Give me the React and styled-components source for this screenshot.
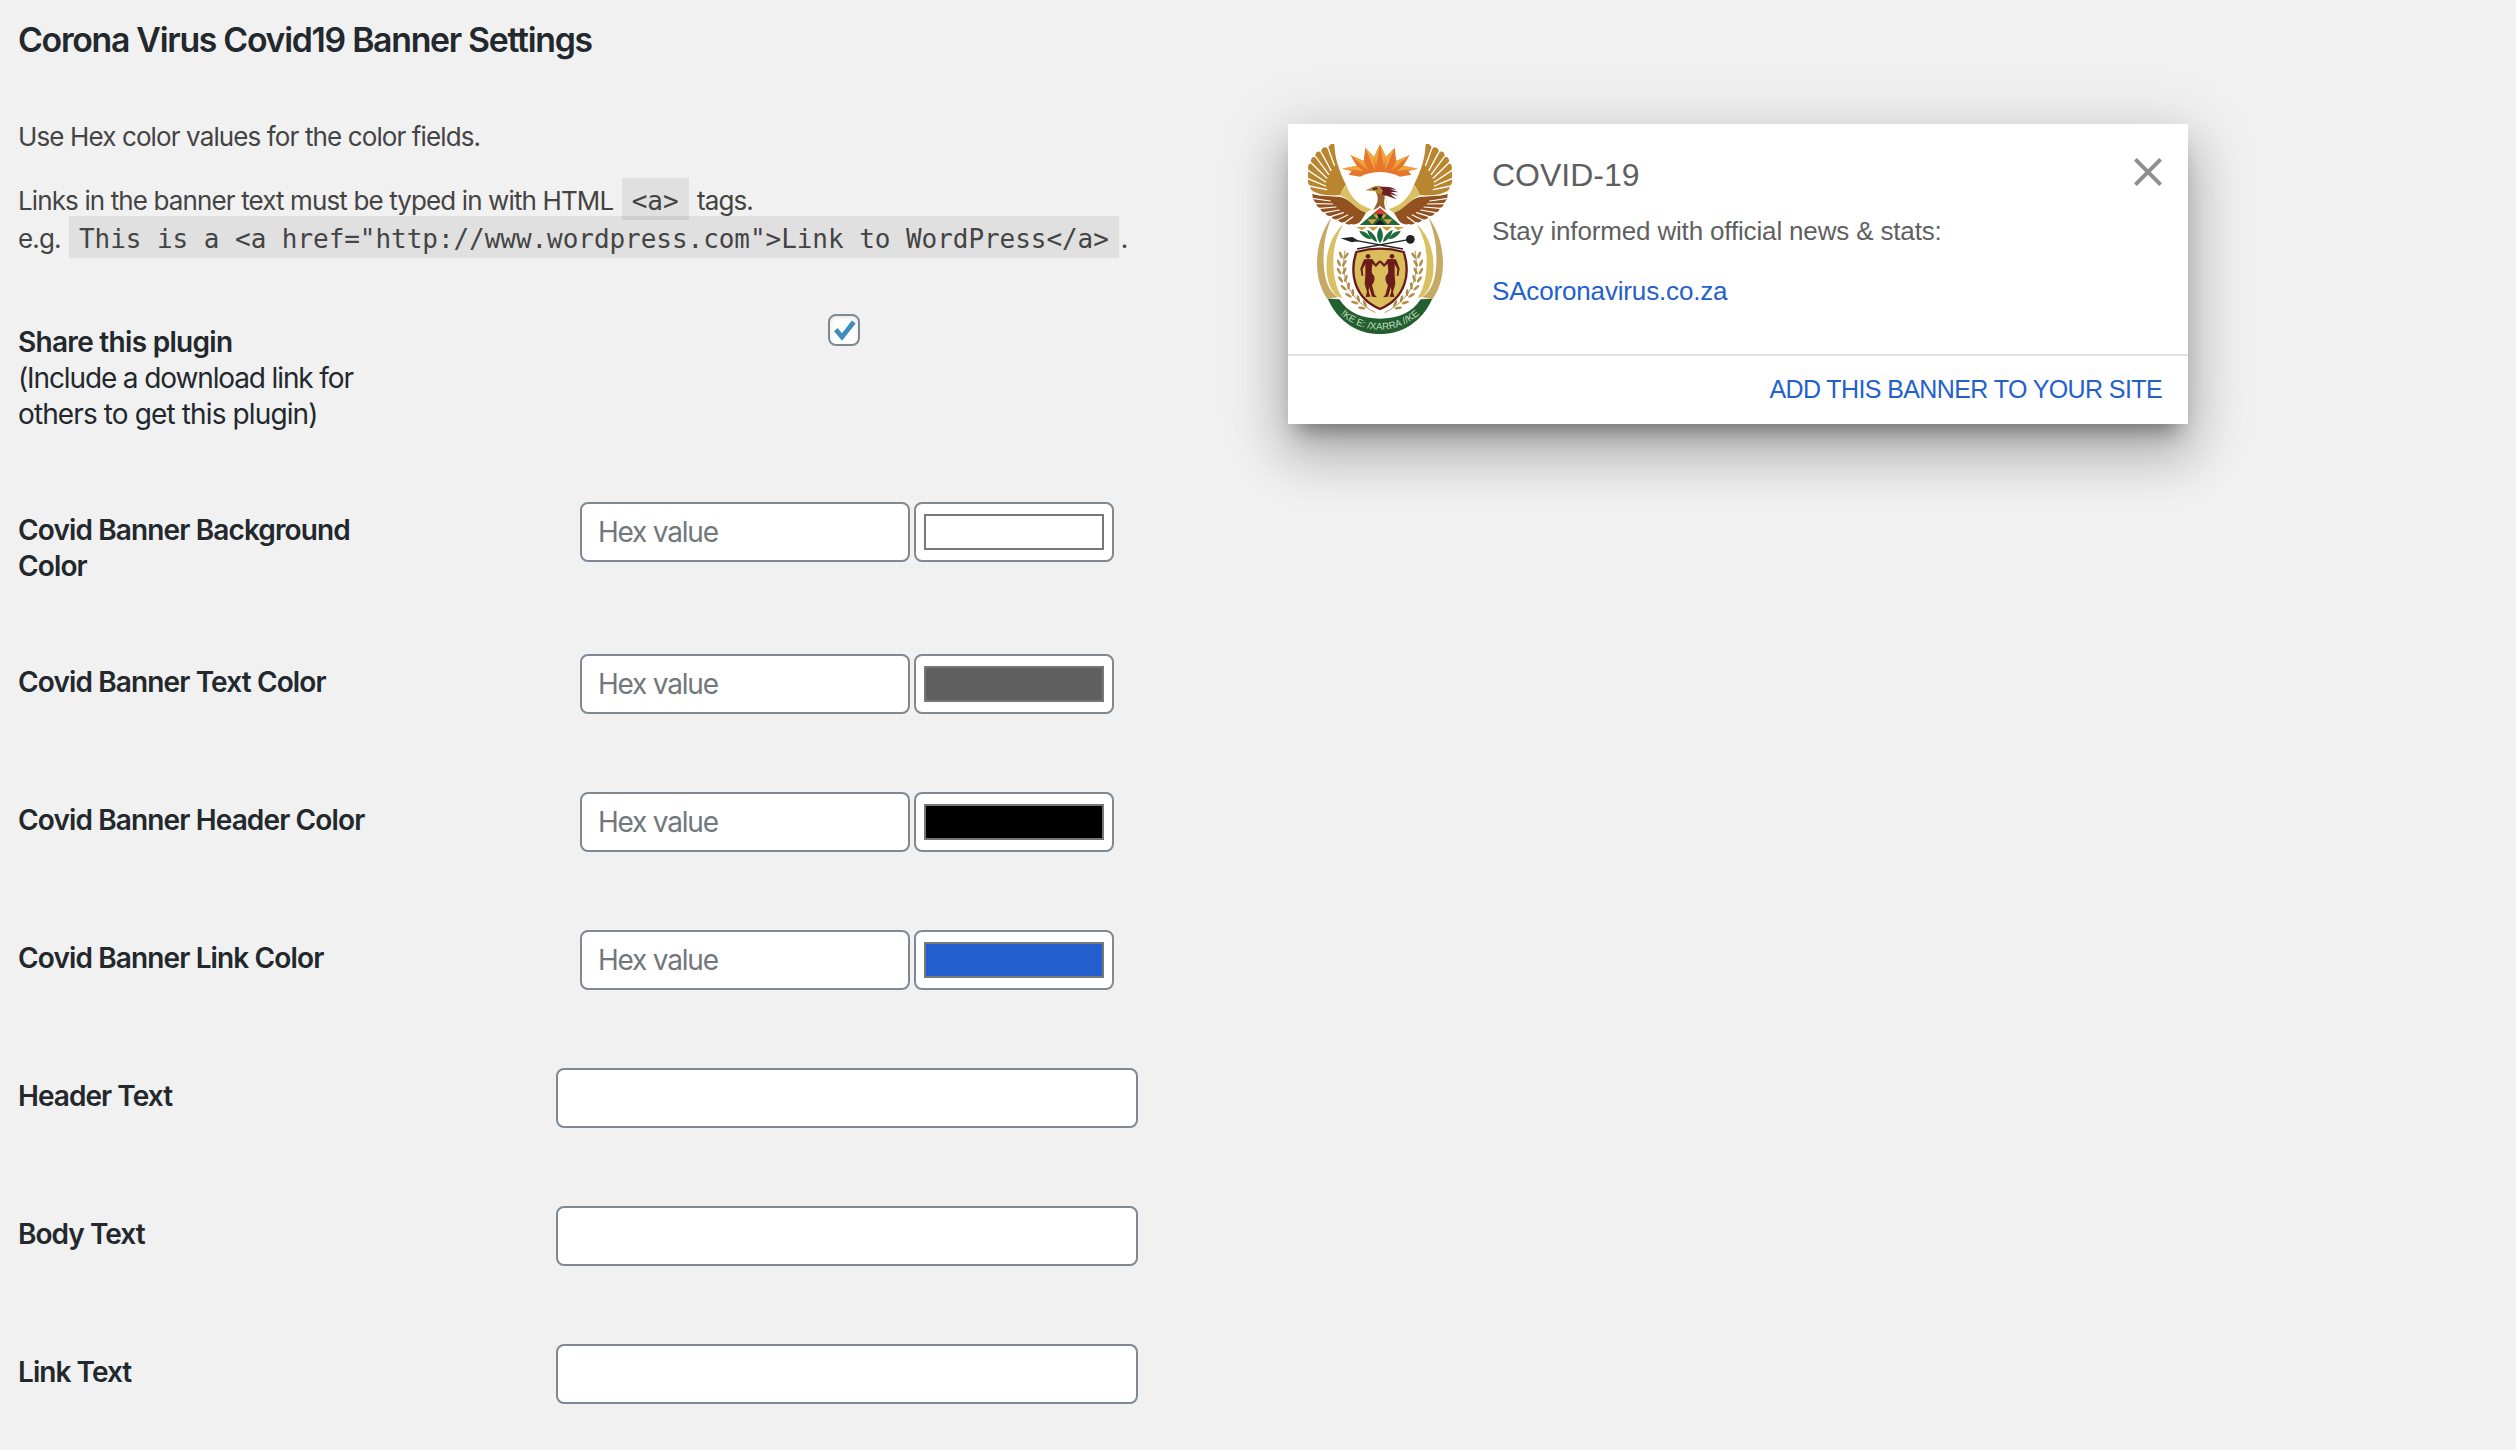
import React from "react";
import styled, { createGlobalStyle } from "styled-components";

const GlobalStyle = createGlobalStyle`
  * { box-sizing: border-box; }
  html, body { margin: 0; padding: 0; background: #f1f1f1; }
  body { font-family: Inter, "Liberation Sans", sans-serif; color: #23282d; overflow: hidden; }
`;

const Page = styled.main`
  display: grid;
  grid-template-columns: 1270px 900px;
  align-items: start;
  height: 1450px;
  padding-left: 18px;
  background: #f1f1f1;
  overflow: hidden;
`;

const SettingsColumn = styled.section`
  padding-top: 18px;
`;

const PageTitle = styled.h1`
  margin: 0 0 56px;
  font-size: 33.8px;
  line-height: 44px;
  font-weight: 600;
  letter-spacing: -1.28px;
`;

const Paragraph = styled.p`
  margin: 0 0 26px;
  font-size: 26px;
  line-height: 38px;
  letter-spacing: -0.88px;
  color: #444;
  white-space: nowrap;
`;

const Code = styled.code`
  margin: 0 2px;
  padding: 8px 10px 4px;
  background: rgba(0, 0, 0, 0.07);
  font-family: "DejaVu Sans Mono", monospace;
  font-size: 26px;
  line-height: 1;
  letter-spacing: -0.05px;
`;

const Row = styled.div`
  display: grid;
  grid-template-columns: 400px 858px;
  min-height: 138px;
`;

const Label = styled.label`
  padding: 40px 20px 40px 0;
  font-size: 28px;
  line-height: 36px;
  font-weight: 600;
  letter-spacing: ${(p) => p.$tracking ?? -0.87}px;
`;

const LabelNote = styled.span`
  display: block;
  font-weight: 400;
  letter-spacing: ${(p) => p.$tracking}px;
`;

const Field = styled.div`
  display: flex;
  justify-content: center;
  align-items: flex-start;
  gap: 4px;
  padding-top: 30px;
`;

const TextInput = styled.input`
  width: ${(p) => p.$width}px;
  height: 60px;
  padding: 0 16px;
  border: 2px solid #7e8993;
  border-radius: 8px;
  background: #fff;
  font-family: Inter, "Liberation Sans", sans-serif;
  font-size: 28px;
  letter-spacing: -1.2px;
  color: #32373c;
  outline: none;
  &::placeholder { color: #72777c; opacity: 1; }
`;

const ColorWell = styled.div`
  width: 200px;
  height: 60px;
  padding: 10px 8px;
  border: 2px solid #7e8993;
  border-radius: 8px;
  background: #fff;
`;

const Swatch = styled.div`
  height: 36px;
  border: 2px solid #777;
  background: ${(p) => p.$color};
`;

const Checkbox = styled.span`
  display: block;
  width: 32px;
  height: 32px;
  margin-right: 6px;
  border: 2px solid #7e8993;
  border-radius: 8px;
  background: #fff;
  box-shadow: inset 0 2px 4px rgba(0, 0, 0, 0.1);
  svg { display: block; }
`;

const Card = styled.aside`
  margin-top: 124px;
  height: 300px;
  background: #fff;
  font-family: "Liberation Sans", Arial, sans-serif;
  color: #5f5f5f;
  box-shadow:
    0 16px 20px -10px rgba(0, 0, 0, 0.38),
    0 32px 48px 4px rgba(0, 0, 0, 0.18),
    0 12px 60px 10px rgba(0, 0, 0, 0.12);
`;

const CardBody = styled.div`
  display: flex;
  align-items: flex-start;
  height: 230px;
  padding: 20px 26px 0 20px;
`;

const CardText = styled.div`
  flex: 1;
  margin-left: 40px;
`;

const CardTitle = styled.h2`
  margin: 12px 0 0;
  font-size: 32px;
  line-height: 38px;
  font-weight: 400;
`;

const CardLine = styled.p`
  margin: ${(p) => p.$top}px 0 0;
  font-size: 26px;
  line-height: 36px;
  letter-spacing: -0.16px;
`;

const Link = styled.a`
  color: #2360ce;
  text-decoration: none;
`;

const CloseButton = styled.button`
  display: block;
  margin-top: 14px;
  padding: 0;
  border: 0;
  background: none;
  svg { display: block; }
`;

const CardFooter = styled.div`
  display: flex;
  justify-content: flex-end;
  align-items: center;
  height: 70px;
  padding: 0 26px 2px 0;
  border-top: 2px solid #e2e2e2;
  font-size: 25px;
  line-height: 36px;
  letter-spacing: -0.6px;
`;

const kernels = [
  [190, 402, -8], [184, 425, -4], [184, 449, 2], [188, 473, 10], [196, 497, 20],
  [209, 519, 32], [226, 540, 44], [246, 556, 54],
];

function EmblemHalf() {
  return (
    <g>
      <path fill="#b9852e" d="M163 72 C154 69 146 75 144 86 C135 77 124 84 122 97 C113 90 104 98 106 112 C97 108 90 117 94 131 C86 129 81 141 87 154 C80 156 80 168 86 177 C82 181 83 192 91 199 C90 207 96 214 104 216 C126 227 155 227 181 226 C184 213 190 204 198 194 C178 156 164 112 163 72Z" />
      <g stroke="#fff" strokeWidth="4" strokeLinecap="round" fill="none">
        <path d="M144 84 L163 136M122 94 L153 151M106 109 L146 163M93 128 L140 174M85 152 L137 186M84 176 L137 198M88 198 L140 209" />
      </g>
      <path fill="#d9c163" d="M199 196 C190 204 184 214 181 227 C208 233 226 268 258 278 L275 268 C245 260 213 238 199 196Z" />
      <path fill="#93511f" d="M97 222 C122 230 152 228 181 231 C210 235 222 266 258 278 L246 298 C240 310 226 316 213 312 C205 316 196 312 192 307 C182 309 175 304 172 298 C162 300 155 294 153 288 C142 290 136 283 135 277 C125 277 121 270 121 264 C112 262 108 256 109 250 C101 244 97 234 97 222Z" />
      <g stroke="#fff" strokeWidth="3.6" strokeLinecap="round" fill="none">
        <path d="M101 236 L151 243M108 251 L158 252M119 265 L168 261M134 278 L178 270M152 290 L190 278M170 301 L203 285M192 310 L218 291" />
      </g>
      <path fill="#c6a962" d="M154 293 C118 340 106 405 113 460 C117 490 128 517 142 537 L173 532 C143 510 133 475 131 430 C129 380 136 340 154 293Z" />
      <path fill="#d9c163" d="M191 311 C149 350 136 405 140 455 C143 490 156 516 173 530 L187 534 C168 505 160 465 160 425 C160 380 171 345 191 311Z" />
      <path fill="none" stroke="#a8873f" strokeWidth="2.5" d="M195 392 C184 450 190 530 286 578" />
      {kernels.map(([x, y, r]) => (
        <g key={y} fill="#b28b45" transform={`translate(${x} ${y}) rotate(${-r})`}>
          <ellipse cx="-7" cy="4" rx="4" ry="11" transform="rotate(-28 -7 4)" />
          <ellipse cx="9" cy="4" rx="4" ry="11" transform="rotate(28 9 4)" />
        </g>
      ))}
      <path fill="#d09a3a" d="M228 321 L262 319 L246 331Z M262 319 L297 319 L279 333Z" />
      <path fill="#1e6b3d" d="M238 333 C252 332 268 342 274 358 C258 356 244 347 238 333Z M262 329 C276 335 290 350 291 367 C274 358 264 345 262 329Z" />
    </g>
  );
}

function ShieldFigure() {
  return (
    <g fill="#6b1d1d">
      <circle cx="264" cy="409" r="7" />
      <path d="M252 418 L277 417 L287 432 L298 421 L302 426 L288 441 L277 431 L275 455 L279 466 L256 466 L256 433 L248 447 L250 467 L245 468 L241 446Z" />
      <path d="M256 465 L281 465 C287 478 281 488 276 496 L284 524 L291 532 L276 530 L267 500 L266 514 L271 530 L257 531 L261 515 L254 492Z" />
    </g>
  );
}

function Emblem() {
  return (
    <svg width="144" height="190" viewBox="84 72 432 570" aria-label="Coat of arms">
      <defs>
        <path id="motto" d="M160 560 Q216 628 300 629 Q384 628 440 560" />
      </defs>
      <path fill="#e6772d" d="M186 146 L230 137 L211 105 L251 123 L256 83 L282 111 L300 73 L318 111 L344 83 L349 123 L389 105 L370 137 L414 146 L385 153 L394 164 L360 170 Q330 156 300 156 Q270 156 240 170 L206 164 L215 153Z" />
      <path fill="#efa63b" d="M211 105 L251 123 L264 150Z M256 83 L282 111 L284 150Z M344 83 L318 111 L316 150Z M389 105 L349 123 L336 150Z M186 146 L230 137 L250 153Z M414 146 L370 137 L350 153Z M300 73 L282 111 L288 138Z M300 73 L318 111 L312 138Z" />
      <EmblemHalf />
      <g transform="translate(600 0) scale(-1 1)"><EmblemHalf /></g>
      <path fill="#95602c" d="M287 216 C298 232 294 250 279 270 L300 262 L318 270 C311 254 311 240 318 222 L304 212Z" />
      <path fill="none" stroke="#e9d3a0" strokeWidth="2.5" d="M313 228 C319 238 322 248 318 258" />
      <path fill="#b9873a" d="M256 211 L274 203 C282 196 298 195 308 200 L312 222 C300 224 290 221 286 214 L272 212Z" />
      <path fill="#6e2024" d="M300 202 C320 198 338 203 349 209 L331 208 L356 217 L332 216 L355 228 L331 223 L350 238 L320 227 L304 222 L309 212Z" />
      <path fill="#4a2a1c" d="M276 205 L290 202 L294 208 L280 210Z" />
      <path fill="#fff" d="M300 257 L370 320 L230 320Z" />
      <path fill="#22693c" d="M300 264 L361 315 L239 315Z" />
      <path fill="#df3a2c" d="M300 264 L320 281 L280 281Z" />
      <path fill="#e0a23c" d="M280 283 L300 283 L290 297Z M300 283 L320 283 L310 297Z M262 298 L290 298 L276 313Z M310 298 L338 298 L324 313Z" />
      <path fill="#1b1b1b" d="M290 283 L310 283 L300 297Z M300 299 L318 314 L282 314Z" />
      <path fill="#1e6b3d" d="M300 322 C312 338 311 356 300 370 C289 356 288 338 300 322Z" />
      <path stroke="#222" strokeWidth="4" fill="none" d="M225 361 L369 387M231 387 L390 358" />
      <path fill="#222" d="M182 355 L217 351 L237 363 L215 367Z" />
      <circle cx="391" cy="358" r="13" fill="#222" />
      <path fill="#d9be5b" stroke="#6b1a1c" strokeWidth="7" d="M229 396 Q265 386 300 386 Q335 386 371 396 C391 455 381 533 300 567 C219 533 209 455 229 396Z" />
      <ShieldFigure />
      <g transform="translate(600 0) scale(-1 1)"><ShieldFigure /></g>
      <path fill="#245f30" d="M143 536 L178 538 C204 580 250 596 300 596 C350 596 396 580 422 538 L457 536 C424 608 365 642 300 642 C235 642 176 608 143 536Z" />
      <text fill="#c2dfc3" fontFamily="Liberation Sans, sans-serif" fontSize="29" textAnchor="middle">
        <textPath href="#motto" startOffset="50%">!KE E: /XARRA //KE</textPath>
      </text>
    </svg>
  );
}

const colorRows = [
  ["Covid Banner Background Color", "#ffffff"],
  ["Covid Banner Text Color", "#5f5f5f"],
  ["Covid Banner Header Color", "#000000"],
  ["Covid Banner Link Color", "#2360ce"],
];

const textRows = ["Header Text", "Body Text", "Link Text"];

export default function App() {
  return (
    <>
      <GlobalStyle />
      <Page>
        <SettingsColumn>
          <PageTitle>Corona Virus Covid19 Banner Settings</PageTitle>
          <Paragraph>Use Hex color values for the color fields.</Paragraph>
          <Paragraph>
            Links in the banner text must be typed in with HTML <Code>&lt;a&gt;</Code> tags.
            <br />
            e.g. <Code>{'This is a <a href="http://www.wordpress.com">Link to WordPress</a>'}</Code>.
          </Paragraph>
          <Row>
            <Label $tracking={-0.7}>
              Share this plugin
              <LabelNote $tracking={-1.12}>(Include a download link for</LabelNote>
              <LabelNote $tracking={-0.88}>others to get this plugin)</LabelNote>
            </Label>
            <Field>
              <Checkbox role="checkbox" aria-checked="true">
                <svg width="28" height="28" viewBox="0 0 28 28">
                  <path d="M5.8 13.6 L12 21 L23.8 6" fill="none" stroke="#3f8ebf" strokeWidth="4.8" />
                </svg>
              </Checkbox>
            </Field>
          </Row>
          {colorRows.map(([label, color]) => (
            <Row key={label}>
              <Label>{label}</Label>
              <Field>
                <TextInput $width={330} placeholder="Hex value" />
                <ColorWell><Swatch $color={color} /></ColorWell>
              </Field>
            </Row>
          ))}
          {textRows.map((label) => (
            <Row key={label}>
              <Label $tracking={-0.95}>{label}</Label>
              <Field><TextInput $width={582} /></Field>
            </Row>
          ))}
        </SettingsColumn>
        <Card>
          <CardBody>
            <Emblem />
            <CardText>
              <CardTitle>COVID-19</CardTitle>
              <CardLine $top={19}>Stay informed with official news &amp; stats:</CardLine>
              <CardLine $top={24}><Link>SAcoronavirus.co.za</Link></CardLine>
            </CardText>
            <CloseButton aria-label="Close">
              <svg width="28" height="28" viewBox="0 0 28 28">
                <path d="M1.4 1.4 L26.6 26.6 M26.6 1.4 L1.4 26.6" stroke="#8f8f8f" strokeWidth="4" />
              </svg>
            </CloseButton>
          </CardBody>
          <CardFooter><Link>ADD THIS BANNER TO YOUR SITE</Link></CardFooter>
        </Card>
      </Page>
    </>
  );
}
